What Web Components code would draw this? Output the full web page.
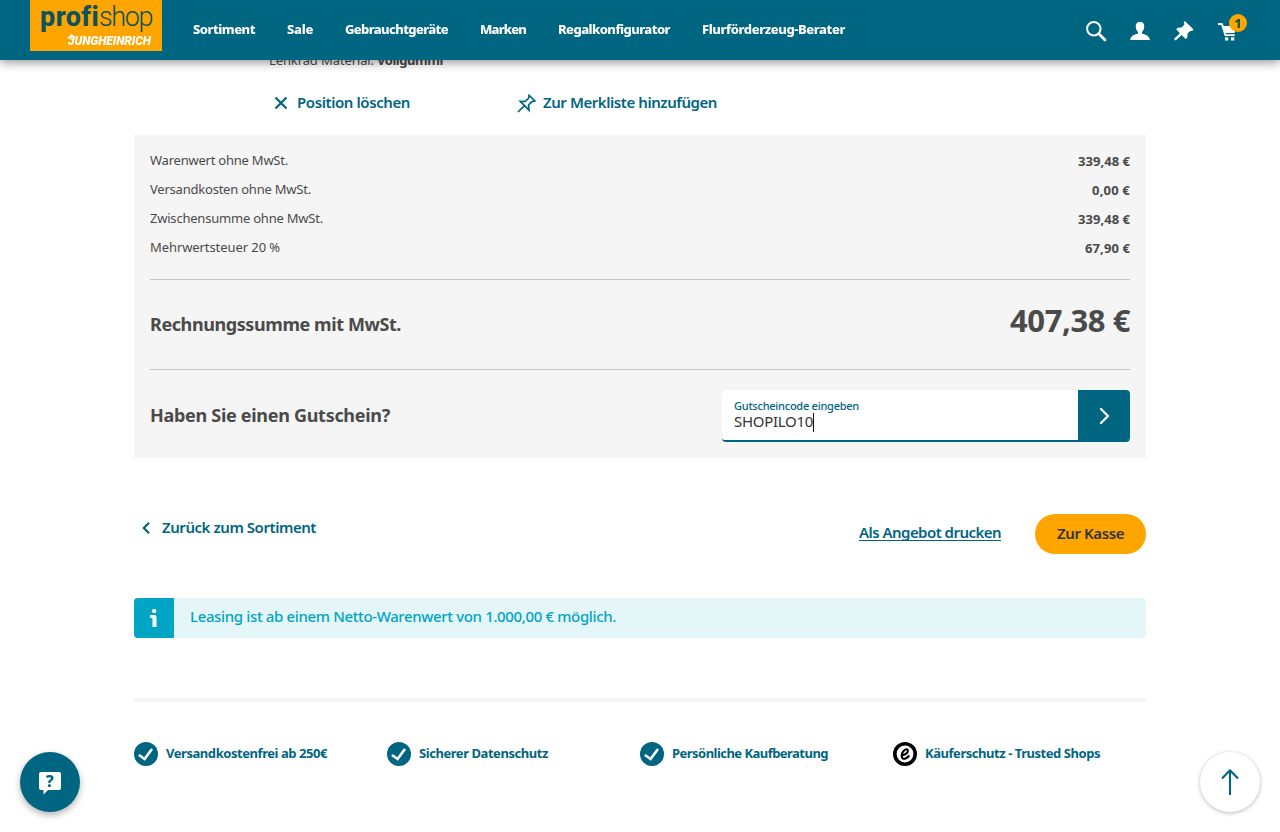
<!DOCTYPE html>
<html lang="de">
<head>
<meta charset="utf-8">
<title>Warenkorb</title>
<style>
  html,
  body {
    margin: 0;
    height: 832px;
    overflow: hidden;
    background: #fff;
    color: #4a4a4a;
    font-family: "Noto Sans", "Open Sans", sans-serif;
    font-size: 13px;
  }
</style>
</head>
<body>
<shop-page></shop-page>
<script>
const html = String.raw;

class ShopElement extends HTMLElement {
  connectedCallback() {
    if (!this.shadowRoot) {
      this.attachShadow({ mode: "open" });
    }
    this.shadowRoot.innerHTML = this.render();
    this.ready();
  }

  render() {
    return "";
  }

  ready() {}
}

// One line of text, tracked so that it fills the given width exactly
class ShopText extends ShopElement {
  render() {
    return html`
      <style>
        :host {
          display: inline-block;
          white-space: nowrap;
          flex: none;
        }
        span {
          display: inline-block;
        }
        :host([underline]) span {
          text-decoration: underline;
          text-decoration-thickness: 1px;
          text-underline-offset: 2px;
          text-decoration-skip-ink: none;
        }
      </style>
      <span><slot></slot></span>
    `;
  }

  ready() {
    const width = Number(this.getAttribute("width"));
    const span = this.shadowRoot.querySelector("span");
    const natural = span.getBoundingClientRect().width;
    const count = this.textContent.length;
    span.style.letterSpacing = `${(width - natural) / count}px`;
    this.style.width = `${width}px`;
  }
}

const icons = {
  search: html`<svg width="22" height="22" fill="none" stroke="currentColor">
    <circle cx="8.800" cy="8.800" r="6.700" stroke-width="2" />
    <path d="M13.800 13.800 20 20" stroke-width="2.800" stroke-linecap="round" />
  </svg>`,
  user: html`<svg width="22" height="22" fill="currentColor">
    <path d="M11 2C7.700 2 6.600 4 6.800 7c.2 2.700 1.300 4.200 2.300 5.100v1.300c-3.700 1-7.600 2.300-8 6.600h19.800c-.4-4.300-4.300-5.600-8-6.600v-1.300c1-.9 2.100-2.400 2.300-5.100C15.400 4 14.300 2 11 2z" />
  </svg>`,
  pin: html`<svg width="22" height="22" fill="currentColor">
    <path d="M11.800 1 20.600 9.500 19 11.100 17.600 10.700 14.600 13.600 14.300 17.800 12.700 18.900 8.600 15 3 20.300 1.400 20.300 1.400 18.600 6.900 13.200 3.200 9.200 4.600 7.700 8.600 7.500 11.400 4.600 10.700 2.400z" />
  </svg>`,
  pinOutline: html`<svg width="20" height="20" fill="none" stroke="currentColor" stroke-width="1.700">
    <path d="M11.300 1.500 18.500 8.700M12.200 2.600 11.400 5.600 8.100 8.500 3.300 8.400 12 17.200 11.600 12 14.600 8.800 17.700 8M7.500 12.700 1 19" />
  </svg>`,
  cart: html`<svg width="22" height="22" fill="currentColor">
    <path d="M1 3H5.300L6.700 6H20L17.500 13H8.500L9 14.300H17.800V16H7.700L4.200 5H1z" />
    <rect x="8" y="17.300" width="3.300" height="3.300" rx=".6" />
    <rect x="14" y="17.300" width="3.300" height="3.300" rx=".6" />
  </svg>`,
  close: html`<svg width="14" height="14" fill="none" stroke="currentColor" stroke-width="2.200">
    <path d="M1.500 1.500 12.500 12.500M12.500 1.500 1.500 12.500" />
  </svg>`,
  back: html`<svg width="8" height="12" fill="none" stroke="currentColor" stroke-width="2.200">
    <path d="M7 .8 1.800 6 7 11.200" />
  </svg>`,
  next: html`<svg width="12" height="18" fill="none" stroke="currentColor" stroke-width="2.300" stroke-linecap="round" stroke-linejoin="round">
    <path d="M2 2 9 9 2 16" />
  </svg>`,
  info: html`<svg width="10" height="20" fill="currentColor">
    <rect x="3.200" y="1" width="4" height="4" rx="1.400" />
    <path d="M1 7H5.500Q7.500 7 7.500 9V19H3.500V10H1z" />
  </svg>`,
  check: html`<svg width="24" height="24">
    <circle cx="12" cy="12" r="12" fill="#006580" />
    <path d="M5.700 13.500 10.600 17 17.400 7.800" fill="none" stroke="#fff" stroke-width="2.600" stroke-linecap="round" />
  </svg>`,
  trusted: html`<svg width="24" height="24">
    <circle cx="12" cy="12" r="12" fill="#000" />
    <circle cx="12" cy="12" r="8.400" fill="#fff" />
    <path d="M8.800 13.200C12.300 13 15 10.800 14.900 8.500 14.700 6.700 12.700 7.100 11.100 8.500 8.700 10.700 8 14.300 9.400 16 11 17.800 14 16.300 15.800 14" fill="none" stroke="#000" stroke-width="2.100" stroke-linecap="round" />
  </svg>`,
  up: html`<svg width="20" height="28" fill="none" stroke="currentColor" stroke-width="2.100">
    <path d="M10 27V2M2 10.500 10 2.300 18 10.500" stroke-linejoin="round" />
  </svg>`,
};

class ShopIcon extends ShopElement {
  render() {
    return html`
      <style>
        :host {
          display: inline-flex;
          flex: none;
        }
        svg {
          display: block;
        }
      </style>
      ${icons[this.getAttribute("name")]}
    `;
  }
}

class ShopLogo extends ShopElement {
  render() {
    return html`
      <style>
        :host {
          display: block;
          box-sizing: border-box;
          width: 132px;
          height: 51px;
          padding: 2px 10px 0;
          background: #ffa500;
          color: #0d525c;
          font-family: Roboto, "Noto Sans", sans-serif;
        }
        .name {
          display: flex;
          height: 32px;
          font-size: 27px;
          line-height: 31px;
        }
        .profi {
          font-weight: 800;
        }
        .shop {
          font-weight: 300;
        }
        .brand {
          display: flex;
          align-items: flex-end;
          justify-content: flex-end;
          height: 14px;
          padding-right: 1px;
          color: #fff;
          font-size: 12px;
          font-style: italic;
          font-weight: 900;
          line-height: 14px;
        }
        svg {
          margin-right: -7px;
          margin-bottom: 8px;
        }
      </style>
      <div class="name">
        <shop-text class="profi" width="59">profi</shop-text>
        <shop-text class="shop" width="53">shop</shop-text>
      </div>
      <div class="brand">
        <svg width="8" height="6" fill="none" stroke="#fff" stroke-width="1.400"><path d="M.7 4.500 4.700 1 7.400 3.800M4.500 1 3.500 6" /></svg>
        <shop-text width="83">JUNGHEINRICH</shop-text>
      </div>
    `;
  }
}

class ShopHeader extends ShopElement {
  render() {
    return html`
      <style>
        :host {
          position: fixed;
          inset: 0 0 auto;
          z-index: 10;
          display: flex;
          box-sizing: border-box;
          height: 60px;
          padding: 0 41px 0 30px;
          background: #006580;
          box-shadow: 0 2px 10px rgb(0 0 0 / 45%);
          color: #fff;
        }
        nav {
          display: flex;
          gap: 32px;
          margin-left: 31px;
          font-weight: 800;
          font-size: 13px;
          line-height: 58px;
        }
        .tools {
          display: flex;
          align-items: center;
          gap: 22px;
          margin-left: auto;
          padding-top: 1px;
        }
        .cart {
          position: relative;
          display: flex;
        }
        .count {
          position: absolute;
          top: -6px;
          left: 12px;
          width: 18px;
          height: 18px;
          border-radius: 50%;
          background: #ffa500;
          color: #0d525c;
          font-weight: 800;
          font-size: 13px;
          line-height: 18px;
          text-align: center;
        }
      </style>
      <shop-logo></shop-logo>
      <nav>
        <shop-text width="62">Sortiment</shop-text>
        <shop-text width="26">Sale</shop-text>
        <shop-text width="103">Gebrauchtgeräte</shop-text>
        <shop-text width="46">Marken</shop-text>
        <shop-text width="112">Regalkonfigurator</shop-text>
        <shop-text width="143">Flurförderzeug-Berater</shop-text>
      </nav>
      <div class="tools">
        <shop-icon name="search"></shop-icon>
        <shop-icon name="user"></shop-icon>
        <shop-icon name="pin"></shop-icon>
        <span class="cart">
          <shop-icon name="cart"></shop-icon>
          <span class="count">1</span>
        </span>
      </div>
    `;
  }
}

class ShopItem extends ShopElement {
  render() {
    return html`
      <style>
        :host {
          display: block;
          height: 84px;
          padding-left: 135px;
        }
        .material {
          display: flex;
          gap: 3px;
          height: 18px;
          line-height: 18px;
        }
        b {
          font-weight: 700;
        }
        .actions {
          display: flex;
          margin-top: 22px;
          color: #006580;
          font-weight: 600;
          font-size: 15px;
          line-height: 22px;
        }
        .action {
          display: flex;
          align-items: center;
          box-sizing: border-box;
          width: 243px;
          height: 24px;
          padding-left: 5px;
          gap: 9px;
        }
        .action + .action {
          gap: 6px;
        }
        .action shop-text {
          padding-bottom: 2px;
        }
      </style>
      <div class="material">
        <shop-text width="105">Lenkrad Material:</shop-text>
        <b><shop-text width="66">Vollgummi</shop-text></b>
      </div>
      <div class="actions">
        <div class="action">
          <shop-icon name="close"></shop-icon>
          <shop-text width="113">Position löschen</shop-text>
        </div>
        <div class="action">
          <shop-icon name="pinOutline"></shop-icon>
          <shop-text width="174">Zur Merkliste hinzufügen</shop-text>
        </div>
      </div>
    `;
  }
}

class ShopRow extends ShopElement {
  render() {
    return html`
      <style>
        :host {
          display: flex;
          justify-content: space-between;
          height: 29px;
          line-height: 19px;
        }
        slot[name="price"] {
          display: block;
          padding-top: 1px;
          font-weight: 700;
        }
      </style>
      <slot></slot>
      <slot name="price"></slot>
    `;
  }
}

class ShopCoupon extends ShopElement {
  render() {
    return html`
      <style>
        :host {
          display: flex;
          box-sizing: border-box;
          width: 408px;
          height: 52px;
          overflow: hidden;
          border-radius: 4px;
          border-bottom: 2px solid #006580;
          background: #fff;
        }
        .field {
          flex: 1;
          padding: 8px 12px 0;
        }
        .label {
          height: 15px;
          color: #006580;
          font-size: 11px;
          font-weight: 500;
          line-height: 15px;
        }
        .value {
          display: flex;
          height: 19px;
          color: #333;
          font-size: 15px;
          line-height: 17px;
        }
        .caret {
          width: 1px;
          height: 19px;
          background: #111;
        }
        .submit {
          display: flex;
          align-items: center;
          justify-content: center;
          box-sizing: border-box;
          width: 52px;
          padding: 3px 0 0 2px;
          background: #006580;
          color: #fff;
        }
      </style>
      <div class="field">
        <div class="label"><shop-text width="125">Gutscheincode eingeben</shop-text></div>
        <div class="value"><shop-text width="79">SHOPILO10</shop-text><span class="caret"></span></div>
      </div>
      <div class="submit"><shop-icon name="next"></shop-icon></div>
    `;
  }
}

class ShopSummary extends ShopElement {
  render() {
    return html`
      <style>
        :host {
          display: block;
          box-sizing: border-box;
          height: 323px;
          padding: 16px;
          background: #f5f5f5;
        }
        .rows {
          height: 128px;
        }
        .total,
        .coupon {
          display: flex;
          justify-content: space-between;
          align-items: center;
          box-sizing: border-box;
          border-top: 1px solid #c6c6c6;
          font-weight: 700;
          font-size: 18px;
        }
        .label {
          margin-top: -2px;
        }
        .total {
          height: 90px;
        }
        .price {
          margin-top: -10px;
          font-size: 31px;
        }
        .coupon {
          height: 92px;
        }
        shop-coupon {
          font-weight: 400;
        }
      </style>
      <div class="rows">
        <shop-row>
          <shop-text width="138">Warenwert ohne MwSt.</shop-text>
          <shop-text slot="price" width="52">339,48 €</shop-text>
        </shop-row>
        <shop-row>
          <shop-text width="161">Versandkosten ohne MwSt.</shop-text>
          <shop-text slot="price" width="38">0,00 €</shop-text>
        </shop-row>
        <shop-row>
          <shop-text width="173">Zwischensumme ohne MwSt.</shop-text>
          <shop-text slot="price" width="52">339,48 €</shop-text>
        </shop-row>
        <shop-row>
          <shop-text width="130">Mehrwertsteuer 20 %</shop-text>
          <shop-text slot="price" width="45">67,90 €</shop-text>
        </shop-row>
      </div>
      <div class="total">
        <shop-text class="label" width="251">Rechnungssumme mit MwSt.</shop-text>
        <shop-text class="price" width="120">407,38 €</shop-text>
      </div>
      <div class="coupon">
        <shop-text class="label" width="240">Haben Sie einen Gutschein?</shop-text>
        <shop-coupon></shop-coupon>
      </div>
    `;
  }
}

class ShopActions extends ShopElement {
  render() {
    return html`
      <style>
        :host {
          display: flex;
          align-items: center;
          height: 40px;
          margin-top: 56px;
          color: #006580;
          font-weight: 600;
          font-size: 15px;
          line-height: 20px;
        }
        .back {
          display: flex;
          align-items: center;
          gap: 12px;
          margin: 0 auto 12px 8px;
        }
        .back shop-text {
          margin-top: -2px;
        }
        .print {
          margin-right: 34px;
          margin-bottom: 4px;
        }
        .checkout {
          display: flex;
          align-items: center;
          justify-content: center;
          box-sizing: border-box;
          width: 111px;
          height: 40px;
          padding-bottom: 2px;
          border-radius: 20px;
          background: #ffa500;
          color: #333;
        }
      </style>
      <div class="back">
        <shop-icon name="back"></shop-icon>
        <shop-text width="154">Zurück zum Sortiment</shop-text>
      </div>
      <shop-text class="print" underline width="142">Als Angebot drucken</shop-text>
      <div class="checkout"><shop-text width="67">Zur Kasse</shop-text></div>
    `;
  }
}

class ShopNotice extends ShopElement {
  render() {
    return html`
      <style>
        :host {
          display: flex;
          height: 40px;
          margin-top: 44px;
          overflow: hidden;
          border-radius: 4px;
          background: #e5f6f9;
          color: #00a5c3;
          font-size: 15px;
          font-weight: 500;
          line-height: 36px;
        }
        .icon {
          display: flex;
          align-items: center;
          justify-content: center;
          width: 40px;
          margin-right: 16px;
          background: #00a5c3;
          color: #fff;
        }
      </style>
      <div class="icon"><shop-icon name="info"></shop-icon></div>
      <slot></slot>
    `;
  }
}

class ShopBenefits extends ShopElement {
  render() {
    return html`
      <style>
        :host {
          display: grid;
          grid-template-columns: repeat(4, 1fr);
          margin-top: 60px;
          padding-top: 40px;
          border-top: 4px solid #f5f5f5;
          color: #006580;
          font-weight: 700;
          line-height: 22px;
        }
        div {
          display: flex;
          gap: 8px;
        }
      </style>
      <div><shop-icon name="check"></shop-icon><shop-text width="161">Versandkostenfrei ab 250€</shop-text></div>
      <div><shop-icon name="check"></shop-icon><shop-text width="129">Sicherer Datenschutz</shop-text></div>
      <div><shop-icon name="check"></shop-icon><shop-text width="156">Persönliche Kaufberatung</shop-text></div>
      <div><shop-icon name="trusted"></shop-icon><shop-text width="175">Käuferschutz - Trusted Shops</shop-text></div>
    `;
  }
}

// Round buttons that float over the bottom corners of the page
class ShopFloating extends ShopElement {
  render() {
    return html`
      <style>
        :host {
          position: fixed;
          bottom: 20px;
          display: flex;
          align-items: center;
          justify-content: center;
          width: 60px;
          height: 60px;
          border-radius: 50%;
        }
        :host([side="left"]) {
          left: 20px;
          background: #006580;
          box-shadow: 0 3px 7px rgb(0 0 0 / 30%);
        }
        :host([side="right"]) {
          right: 20px;
          background: #fff;
          box-shadow: 0 1px 4px rgb(0 0 0 / 28%);
          color: #006580;
        }
      </style>
      <slot></slot>
    `;
  }
}

class ShopHelp extends ShopElement {
  render() {
    return html`
      <style>
        :host {
          display: grid;
          width: 22px;
          height: 22px;
          margin-top: 1px;
          color: #006580;
          font-weight: 800;
          font-size: 16px;
          line-height: 18px;
          text-align: center;
        }
        svg,
        span {
          grid-area: 1 / 1;
        }
      </style>
      <svg width="22" height="23" fill="#fff"><path d="M2 0H20Q22 0 22 2V16Q22 18 20 18H9L4.500 22.500V18H2Q0 18 0 16V2Q0 0 2 0z" /></svg>
      <span>?</span>
    `;
  }
}

class ShopPage extends ShopElement {
  render() {
    return html`
      <style>
        :host {
          display: block;
        }
        main {
          width: 1012px;
          margin: 0 auto;
          padding-top: 51px;
        }
      </style>
      <shop-header></shop-header>
      <main>
        <shop-item></shop-item>
        <shop-summary></shop-summary>
        <shop-actions></shop-actions>
        <shop-notice>
          <shop-text width="426">Leasing ist ab einem Netto-Warenwert von 1.000,00 € möglich.</shop-text>
        </shop-notice>
        <shop-benefits></shop-benefits>
      </main>
      <shop-floating side="left"><shop-help></shop-help></shop-floating>
      <shop-floating side="right"><shop-icon name="up"></shop-icon></shop-floating>
    `;
  }
}

customElements.define("shop-text", ShopText);
customElements.define("shop-icon", ShopIcon);
customElements.define("shop-logo", ShopLogo);
customElements.define("shop-header", ShopHeader);
customElements.define("shop-item", ShopItem);
customElements.define("shop-row", ShopRow);
customElements.define("shop-coupon", ShopCoupon);
customElements.define("shop-summary", ShopSummary);
customElements.define("shop-actions", ShopActions);
customElements.define("shop-notice", ShopNotice);
customElements.define("shop-benefits", ShopBenefits);
customElements.define("shop-floating", ShopFloating);
customElements.define("shop-help", ShopHelp);
customElements.define("shop-page", ShopPage);
</script>
</body>
</html>
